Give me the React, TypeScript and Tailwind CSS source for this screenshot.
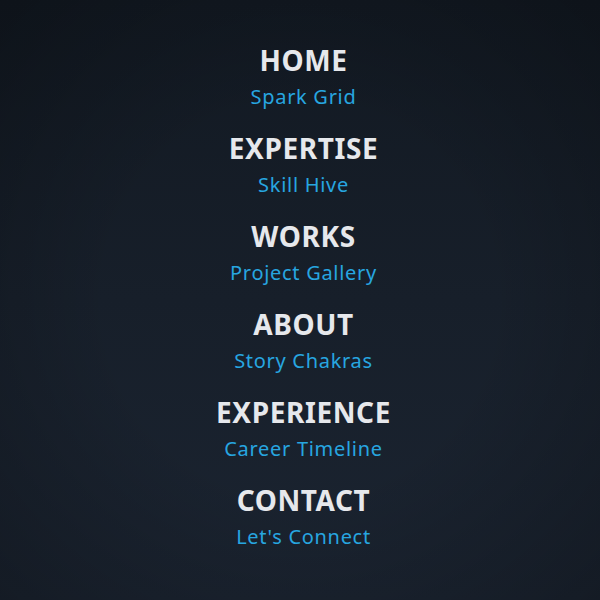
const items = [
  { title: 'HOME', sub: 'Spark Grid' },
  { title: 'EXPERTISE', sub: 'Skill Hive' },
  { title: 'WORKS', sub: 'Project Gallery' },
  { title: 'ABOUT', sub: 'Story Chakras' },
  { title: 'EXPERIENCE', sub: 'Career Timeline' },
  { title: 'CONTACT', sub: "Let's Connect" },
]

export default function App() {
  return (
    <div className="w-full h-[600px] bg-[linear-gradient(180deg,#121922_0%,#171f2a_50%,#1b2431_100%)] font-['Noto_Sans',sans-serif]">
      <div className="w-full h-full bg-[radial-gradient(ellipse_at_center,rgba(0,0,0,0)_45%,rgba(0,0,0,0.25)_100%)]">
        <nav className="flex flex-col items-center gap-[19px] pt-[42px] pl-[7px]">
          {items.map((item) => (
            <div key={item.title} className="flex flex-col items-center">
              <span className="text-[28px] leading-[36px] font-bold tracking-[0.6px] text-[#e6e8ec]">
                {item.title}
              </span>
              <span className="mt-[5px] text-[20px] leading-[28px] tracking-[0.7px] text-[#27a6e0]">
                {item.sub}
              </span>
            </div>
          ))}
        </nav>
      </div>
    </div>
  )
}
